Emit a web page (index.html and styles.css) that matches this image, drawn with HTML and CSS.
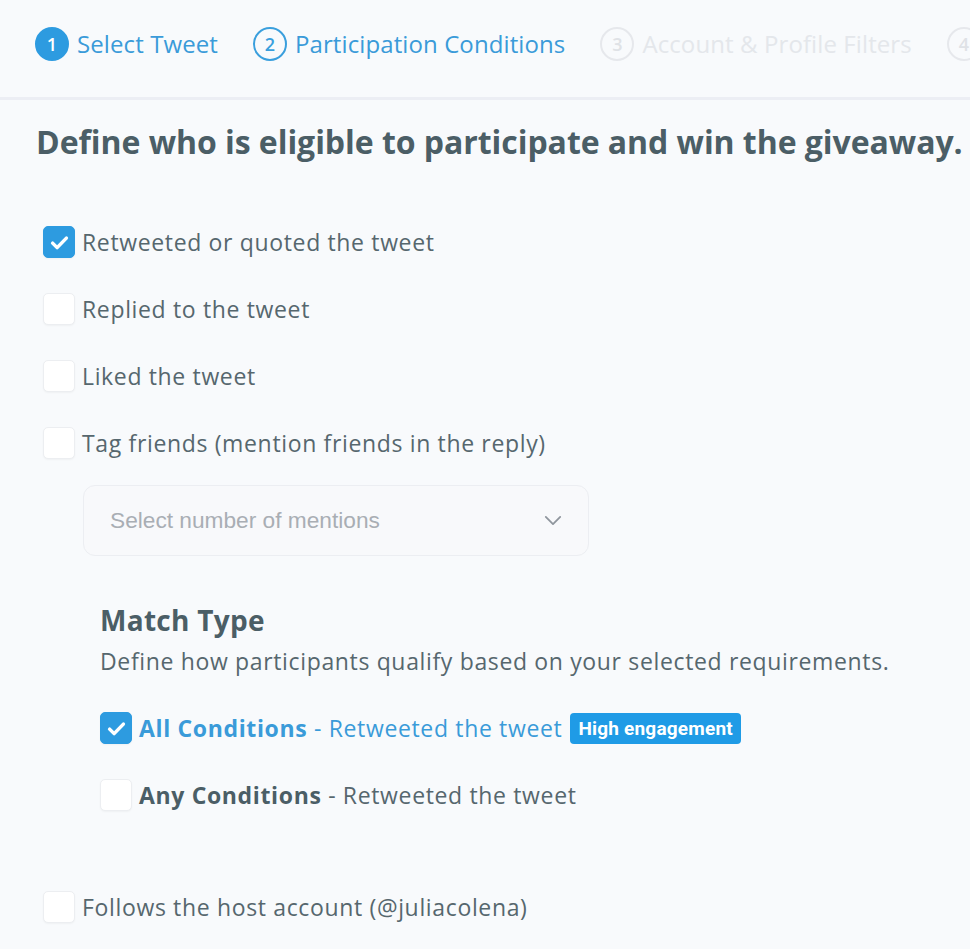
FILE: index.html
```html
<!DOCTYPE html>
<html lang="en">
<head>
<meta charset="utf-8">
<title>Participation Conditions</title>
<link rel="stylesheet" href="styles.css">
</head>
<body>
<header class="steps">
  <div class="step done"><span class="num">1</span><span class="label">Select Tweet</span></div>
  <div class="step active"><span class="num">2</span><span class="label">Participation Conditions</span></div>
  <div class="step todo"><span class="num">3</span><span class="label">Account &amp; Profile Filters</span></div>
  <div class="step todo"><span class="num">4</span></div>
</header>
<main class="content">
  <h1 class="title">Define who is eligible to participate and win the giveaway.</h1>

  <div class="options">
    <label class="option">
      <span class="box checked"><svg viewBox="0 0 20 20" class="tick"><path d="M4.5 10.5l3.6 3.6 7.4-7.6" /></svg></span>
      <span class="text">Retweeted or quoted the tweet</span>
    </label>
    <label class="option">
      <span class="box"></span>
      <span class="text">Replied to the tweet</span>
    </label>
    <label class="option">
      <span class="box"></span>
      <span class="text">Liked the tweet</span>
    </label>
    <label class="option">
      <span class="box"></span>
      <span class="text">Tag friends (mention friends in the reply)</span>
    </label>
  </div>

  <div class="select">
    <span class="placeholder">Select number of mentions</span>
    <svg class="chev" viewBox="0 0 20 12"><path d="M2 2l8 8 8-8" /></svg>
  </div>

  <section class="match">
    <h2 class="match-title">Match Type</h2>
    <p class="match-desc">Define how participants qualify based on your selected requirements.</p>
    <div class="match-rows">
      <label class="option">
        <span class="box checked"><svg viewBox="0 0 20 20" class="tick"><path d="M4.5 10.5l3.6 3.6 7.4-7.6" /></svg></span>
        <span class="text blue"><b>All Conditions</b> - Retweeted the tweet</span>
        <span class="badge">High engagement</span>
      </label>
      <label class="option">
        <span class="box"></span>
        <span class="text"><b class="dark">Any Conditions</b> - Retweeted the tweet</span>
      </label>
    </div>
  </section>

  <label class="option follows">
    <span class="box"></span>
    <span class="text">Follows the host account (@juliacolena)</span>
  </label>
</main>
</body>
</html>
```

FILE: styles.css
```css
* { box-sizing: border-box; }
html, body { margin: 0; padding: 0; }
body {
  background: #f8fafc;
  font-family: "Open Sans", "DejaVu Sans", sans-serif;
  color: #56676e;
  width: 970px;
  height: 949px;
  overflow: hidden;
}

.steps {
  height: 100px;
  border-bottom: 3px solid #eceef4;
  display: flex;
  align-items: center;
  padding-left: 35px;
  gap: 35px;
  white-space: nowrap;
  overflow: hidden;
  padding-bottom: 10px;
}
.step { display: flex; align-items: center; gap: 8px; flex: none; }
.num {
  width: 34px; height: 34px;
  border-radius: 50%;
  display: flex; align-items: center; justify-content: center;
  font-size: 18px; font-weight: 600;
  border: 2px solid #e6e8ec;
  color: #dfe2e6;
}
.label { font-size: 24px; letter-spacing: 0.1px; color: #e4e7eb; }
.done .num { background: #2d9be0; border-color: #2d9be0; color: #fff; }
.active .num { border-color: #3a9fdd; color: #3a9fdd; }
.done .label, .active .label { color: #3a9bd9; }

.content { padding: 0 0 0 36px; }

.title {
  margin: 22px 0 0 0;
  font-size: 32px;
  line-height: 40px;
  font-weight: 700;
  color: #4b5e66;
  white-space: nowrap;
  letter-spacing: -0.05px;
}

.options {
  margin-top: 60px;
  display: flex;
  flex-direction: column;
  gap: 27px;
  padding-left: 7px;
}
.option {
  display: flex;
  align-items: center;
  height: 40px;
  gap: 7px;
  white-space: nowrap;
}
.box {
  width: 32px; height: 32px;
  flex: none;
  border-radius: 5px;
  background: #ffffff;
  border: 1px solid #eceef1;
  box-shadow: 0 1px 2px rgba(0,0,0,0.04);
  display: flex; align-items: center; justify-content: center;
}
.box.checked { background: #2d9be0; border-color: #2d9be0; }
.tick { width: 25px; height: 25px; }
.tick path { fill: none; stroke: #fff; stroke-width: 2.8; stroke-linecap: round; stroke-linejoin: round; }
.text { font-size: 23px; letter-spacing: 0.65px; color: #56676e; }
.text b { font-weight: 700; }
.text.blue { color: #3a9bd9; }
.text .dark { color: #4b5e66; }

.select {
  margin: 22px 0 0 47px;
  width: 506px;
  height: 71px;
  border: 1px solid #eceef2;
  border-radius: 12px;
  background: #f8f9fb;
  display: flex;
  align-items: center;
  justify-content: space-between;
  padding: 0 26px 0 26px;
}
.placeholder {
  font-family: "Liberation Sans", Arial, sans-serif;
  font-size: 22.7px;
  color: #a9aeb4;
}
.chev { width: 18px; height: 11px; }
.chev path { fill: none; stroke: #8f969d; stroke-width: 2; stroke-linecap: round; stroke-linejoin: round; }

.match { margin: 47px 0 0 64px; }
.match-title {
  margin: 0;
  font-size: 28px;
  line-height: 34px;
  font-weight: 700;
  letter-spacing: 0.3px;
  color: #4b5e66;
}
.match-desc {
  margin: 9px 0 0 0;
  font-size: 23px;
  line-height: 30px;
  letter-spacing: 0.65px;
  color: #56676e;
  white-space: nowrap;
}
.match-rows {
  margin-top: 32px;
  display: flex;
  flex-direction: column;
  gap: 27px;
}
.badge {
  margin-left: 1px;
  background: #1f9be6;
  color: #fff;
  font-family: Roboto, "Liberation Sans", sans-serif;
  font-weight: 700;
  font-size: 19px;
  letter-spacing: 0.2px;
  height: 31px;
  padding: 0 8px;
  border-radius: 4px;
  display: flex;
  align-items: center;
}

.follows { margin: 72px 0 0 7px; }
```
